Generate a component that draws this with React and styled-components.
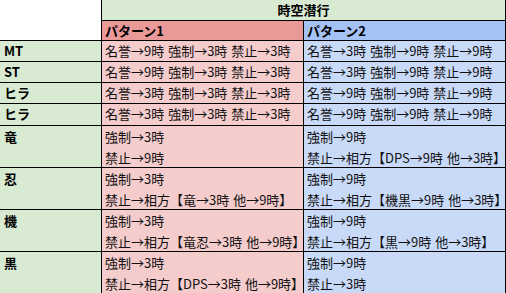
import React from "react";
import styled, { createGlobalStyle } from "styled-components";

const Global = createGlobalStyle`
  html, body {
    margin: 0;
    padding: 0;
    background: #ffffff;
    overflow: hidden;
  }
  body {
    font-family: "Noto Sans CJK JP", "Noto Sans", sans-serif;
    font-size: 13px;
    color: #000;
  }
`;

const tones = {
  green: "#d9ead3",
  redHead: "#ea9999",
  red: "#f4cccc",
  blueHead: "#a4c2f4",
  blue: "#c9daf8",
};

const Sheet = styled.div`
  display: grid;
  grid-template-columns: 101px 201px 201px;
  grid-template-rows: 20px 19px 20px 20px 20px 21px 41px 41px 41px 41px;
  gap: 1px;
  width: 505px;
  padding-right: 1px;
  background: #000;
`;

const Corner = styled.div`
  grid-row: 1 / span 2;
  background: #ffffff;
`;

const GroupHeader = styled.div`
  grid-column: 2 / span 2;
  background: ${tones.green};
  font-weight: 700;
  text-align: center;
  line-height: 20px;
  white-space: nowrap;
`;

const PatternHeader = styled.div`
  background: ${(p) => tones[p.$tone]};
  font-weight: 700;
  line-height: 19px;
  padding-left: 3px;
  white-space: nowrap;
  overflow: hidden;
`;

const Label = styled.div`
  background: ${tones.green};
  font-weight: 700;
  line-height: ${(p) => (p.$tall ? "21px" : "20px")};
  padding-left: 4px;
  white-space: nowrap;
  overflow: hidden;
`;

const Cell = styled.div`
  background: ${(p) => tones[p.$tone]};
  display: flex;
  flex-direction: column;
  padding-left: 3px;
  white-space: nowrap;
  color: #111;
`;

const Line = styled.div`
  line-height: ${(p) => (p.$tall ? "21px" : "20px")};
  word-spacing: 1px;
`;

const single = [
  ["MT", "名誉→9時 強制→3時 禁止→3時", "名誉→3時 強制→9時 禁止→9時"],
  ["ST", "名誉→9時 強制→3時 禁止→3時", "名誉→3時 強制→9時 禁止→9時"],
  ["ヒラ", "名誉→3時 強制→3時 禁止→3時", "名誉→9時 強制→9時 禁止→9時"],
  ["ヒラ", "名誉→3時 強制→3時 禁止→3時", "名誉→9時 強制→9時 禁止→9時"],
];

const double = [
  ["竜", ["強制→3時", "禁止→9時"], ["強制→9時", "禁止→相方【DPS→9時 他→3時】"]],
  ["忍", ["強制→3時", "禁止→相方【竜→3時 他→9時】"], ["強制→9時", "禁止→相方【機黒→9時 他→3時】"]],
  ["機", ["強制→3時", "禁止→相方【竜忍→3時 他→9時】"], ["強制→9時", "禁止→相方【黒→9時 他→3時】"]],
  ["黒", ["強制→3時", "禁止→相方【DPS→3時 他→9時】"], ["強制→9時", "禁止→3時"]],
];

export default function App() {
  return (
    <>
      <Global />
      <Sheet>
        <Corner />
        <GroupHeader>時空潜行</GroupHeader>
        <PatternHeader $tone="redHead">パターン1</PatternHeader>
        <PatternHeader $tone="blueHead">パターン2</PatternHeader>
        {single.map(([label, a, b], i) => (
          <React.Fragment key={"s" + i}>
            <Label>{label}</Label>
            <Cell $tone="red">
              <Line>{a}</Line>
            </Cell>
            <Cell $tone="blue">
              <Line>{b}</Line>
            </Cell>
          </React.Fragment>
        ))}
        {double.map(([label, a, b], i) => (
          <React.Fragment key={"d" + i}>
            <Label $tall>{label}</Label>
            <Cell $tone="red">
              {a.map((t, j) => (
                <Line $tall key={j}>{t}</Line>
              ))}
            </Cell>
            <Cell $tone="blue">
              {b.map((t, j) => (
                <Line $tall key={j}>{t}</Line>
              ))}
            </Cell>
          </React.Fragment>
        ))}
      </Sheet>
    </>
  );
}
